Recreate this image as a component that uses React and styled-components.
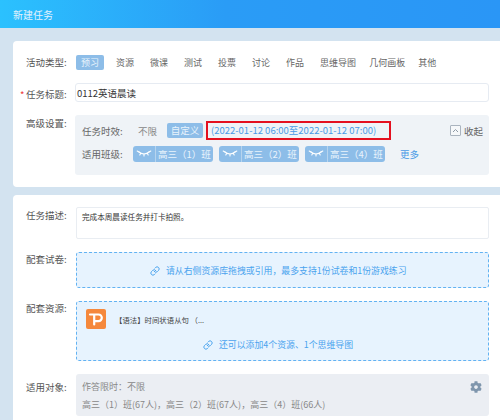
import React from "react";
import styled, { createGlobalStyle } from "styled-components";
import { Link } from "lucide-react";
import { FaCog } from "react-icons/fa";

const Global = createGlobalStyle`
  html, body { margin: 0; padding: 0; }
  body { width: 500px; height: 420px; overflow: hidden; background: #d3e3f0;
    font-family: "Noto Sans CJK SC", "Liberation Sans", sans-serif; }
`;
const Page = styled.div`
  width: 500px; height: 420px; overflow: hidden; display: flex; flex-direction: column;
`;
const Header = styled.header`
  height: 28px; flex: none; display: flex; align-items: center; padding-left: 13px;
  background: linear-gradient(90deg, #2bc1fe 0%, #2a9cf6 45%, #2a96f6 100%);
  color: #e3f2fc; font-size: 10px;
`;
const Content = styled.main`
  padding: 13px 0 0 13px; display: flex; flex-direction: column; gap: 8px;
`;
const Card = styled.section`
  background: #fff; border-radius: 4px 0 0 4px; height: ${p => p.$h}px; box-sizing: border-box;
  padding-top: ${p => p.$pt}px; display: flex; flex-direction: column;
`;
const Row = styled.div`
  display: flex; align-items: flex-start; margin-bottom: ${p => p.$mb || 0}px;
`;
const Label = styled.div`
  width: ${p => p.$w || 63}px; flex: none; box-sizing: border-box; padding-left: 13px; padding-top: ${p => p.$pt || 0}px;
  font-size: 9.5px; line-height: 14px; color: #555; white-space: nowrap; position: relative;
  ${p => p.$req && `&::before { content: "*"; color: #e33; position: absolute; left: 7px; top: ${(p.$pt || 0) + 1}px; }`}
`;
const Tabs = styled.div`
  display: flex; align-items: center; gap: 16px; font-size: 9px; color: #666; padding-left: 1px;
`;
const Tab = styled.span`
  height: 15px; line-height: 15px; padding: 0 ${p => p.$active ? "5px" : "0"}; border-radius: 2px;
  background: ${p => p.$active ? "#8dbde8" : "transparent"};
  color: ${p => p.$active ? "#e8f3fc" : "#666"};
  white-space: nowrap;
  margin-right: ${p => p.$active ? -4 : p.$long ? -3 : 0}px;
`;
const TitleInput = styled.div`
  width: 414px; height: 19px; box-sizing: border-box; border: 1px solid #e6ebf2; border-radius: 3px;
  padding-left: 1px; font-size: 9.5px; line-height: 18px; color: #333;
`;
const Panel = styled.div`
  width: 414px; height: 60px; box-sizing: border-box; background: #eff3f7; border-radius: 3px;
  padding: 6px 6px 0 7px; display: flex; flex-direction: column; gap: 3px;
`;
const PanelRow = styled.div`
  display: flex; align-items: center; height: ${p => p.$h}px; font-size: 9.5px; color: #666;
`;
const PanelLabel = styled.span`
  width: ${p => p.$w}px; flex: none; white-space: nowrap;
`;
const Plain = styled.span`
  color: #888; width: 29px; flex: none; font-size: 9.5px;
`;
const Custom = styled.span`
  width: 36px; height: 15px; flex: none; line-height: 15px; text-align: center; border-radius: 2px;
  background: #8dbde8; color: #e8f3fc; font-size: 9.5px;
`;
const DateBox = styled.span`
  width: 185px; height: 19px; flex: none; margin-left: 3px; box-sizing: border-box;
  border: 2px solid #e4101f; padding-left: 3px; line-height: 15px;
  font-size: 9.5px; color: #4a9be6; white-space: nowrap;
`;
const Collapse = styled.span`
  margin-left: auto; display: flex; align-items: center; gap: 3px; color: #666; font-size: 9.5px;
`;
const ChevronBox = styled.span`
  width: 9px; height: 9px; border: 1px solid #aab4bf; border-radius: 1px; display: flex;
  align-items: center; justify-content: center; background: #f6f8fa;
`;
const ClassTag = styled.span`
  display: flex; width: 80px; height: 16px; flex: none; margin-right: 6px; border-radius: 3px; overflow: hidden;
  background: #8dbde8; color: #e8f3fc; font-size: 9.5px; line-height: 16px; white-space: nowrap;
`;
const EyeCell = styled.span`
  width: 22px; flex: none; display: flex; align-items: center; justify-content: center;
  border-right: 1px solid #b6d4ee;
`;
const ClassName = styled.span`
  padding-left: 2px;
`;
const More = styled.span`
  color: #4a9be6; font-size: 9.5px; margin-left: 9px;
`;
const Desc = styled.div`
  width: 413px; height: 32px; box-sizing: border-box; border: 1px solid #e9edf2; border-radius: 2px;
  padding: 2px 5px; font-size: 7.6px; line-height: 14px; color: #333;
`;
const Drop = styled.div`
  width: 413px; height: ${p => p.$h}px; box-sizing: border-box; border: 1px dashed #62b2f2; border-radius: 3px;
  background: #e7f3fe; display: flex; flex-direction: column; color: #4aa3ee; font-size: 8.9px;
`;
const DropLink = styled.div`
  display: flex; align-items: center; gap: 6px; white-space: nowrap;
  margin-top: ${p => p.$mt}px; padding-left: ${p => p.$pl}px;
`;
const Resource = styled.div`
  display: flex; align-items: center; gap: 9px; padding: 7px 0 0 9px;
  color: #444; font-size: 7.4px; white-space: nowrap;
`;
const Target = styled.div`
  width: 413px; height: 42px; box-sizing: border-box; background: #ebeef3; border-radius: 3px;
  padding: 4px 6px 0 6px; color: #888; font-size: 9px; line-height: 17.5px; white-space: nowrap; position: relative;
`;
const Gear = styled.span`
  position: absolute; right: 7px; top: 7px; color: #7f96ad; font-size: 12px; line-height: 0;
`;

const Eye = () => (
  <svg width="16" height="8" viewBox="0 0 16 8" fill="none" stroke="#fff" strokeWidth="1.1" strokeLinecap="round">
    <path d="M3 2C5.5 4.6 10.5 4.6 13 2" />
    <path d="M1.2 1 3 2M4.6 3.4 3.8 5M8 4V6M11.4 3.4 12.2 5M14.8 1 13 2" />
  </svg>
);
const PptLogo = () => (
  <svg width="20" height="20" viewBox="0 0 20 20">
    <rect width="20" height="20" rx="2" fill="#f5883c" />
    <path d="M4 5.5H12.5a3.2 3.2 0 0 1 0 6.6H8.2M8.2 5.5V15.5" fill="none" stroke="#fff" strokeWidth="2.2" strokeLinecap="round" strokeLinejoin="round" />
  </svg>
);
const classes = ["高三（1）班", "高三（2）班", "高三（4）班"];
const tabs = ["资源", "微课", "测试", "投票", "讨论", "作品", "思维导图", "几何画板", "其他"];

export default function App() {
  return (
    <Page>
      <Global />
      <Header>新建任务</Header>
      <Content>
        <Card $h={146} $pt={14}>
          <Row $mb={13}>
            <Label $w={62}>活动类型:</Label>
            <Tabs>
              <Tab $active>预习</Tab>
              {tabs.map(t => <Tab key={t} $long={t.length > 2}>{t}</Tab>)}
            </Tabs>
          </Row>
          <Row $mb={13}>
            <Label $w={62} $req $pt={4}>任务标题:</Label>
            <TitleInput>0112英语晨读</TitleInput>
          </Row>
          <Row>
            <Label $w={62} $pt={1}>高级设置:</Label>
            <Panel>
              <PanelRow $h={19}>
                <PanelLabel $w={56}>任务时效:</PanelLabel>
                <Plain>不限</Plain>
                <Custom>自定义</Custom>
                <DateBox>(2022-01-12 06:00至2022-01-12 07:00)</DateBox>
                <Collapse>
                  <ChevronBox>
                    <svg width="7" height="5" viewBox="0 0 7 5" fill="none" stroke="#8e9aa6" strokeWidth="1"><path d="M1 4 3.5 1.5 6 4" /></svg>
                  </ChevronBox>
                  收起
                </Collapse>
              </PanelRow>
              <PanelRow $h={22}>
                <PanelLabel $w={51}>适用班级:</PanelLabel>
                {classes.map(c => (
                  <ClassTag key={c}>
                    <EyeCell><Eye /></EyeCell>
                    <ClassName>{c}</ClassName>
                  </ClassTag>
                ))}
                <More>更多</More>
              </PanelRow>
            </Panel>
          </Row>
        </Card>
        <Card $h={240} $pt={12}>
          <Row $mb={13}>
            <Label $pt={1}>任务描述:</Label>
            <Desc>完成本周晨读任务并打卡拍照。</Desc>
          </Row>
          <Row $mb={13}>
            <Label>配套试卷:</Label>
            <Drop $h={36}>
              <DropLink $mt={11} $pl={73}>
                <Link size={10} strokeWidth={2.4} />
                请从右侧资源库拖拽或引用，最多支持1份试卷和1份游戏练习
              </DropLink>
            </Drop>
          </Row>
          <Row $mb={13}>
            <Label>配套资源:</Label>
            <Drop $h={60}>
              <Resource>
                <PptLogo />
                【语法】时间状语从句 （...
              </Resource>
              <DropLink $mt={9} $pl={126}>
                <Link size={10} strokeWidth={2.4} />
                还可以添加4个资源、1个思维导图
              </DropLink>
            </Drop>
          </Row>
          <Row>
            <Label $pt={6}>适用对象:</Label>
            <Target>
              作答限时：不限
              <br />
              高三（1）班(67人)，高三（2）班(67人)，高三（4）班(66人)
              <Gear><FaCog /></Gear>
            </Target>
          </Row>
        </Card>
      </Content>
    </Page>
  );
}
